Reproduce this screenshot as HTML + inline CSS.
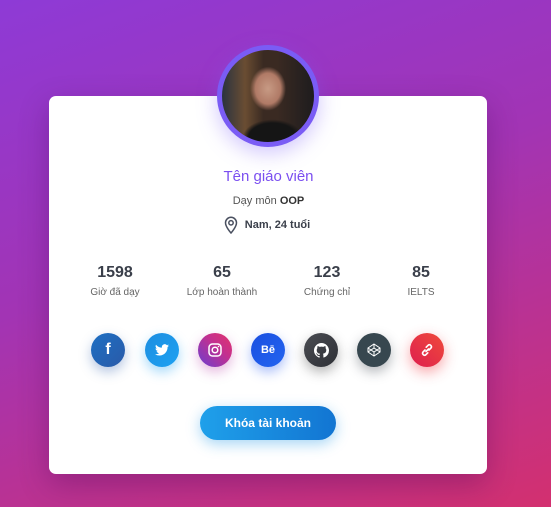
<!DOCTYPE html>
<html><head><style>
*{margin:0;padding:0;box-sizing:border-box}
body{width:551px;height:507px;overflow:hidden;background:linear-gradient(160deg,#8e3ad6 0%,#a234b4 45%,#d3306f 100%);font-family:"Liberation Sans","Noto Sans CJK SC",sans-serif;position:relative}
.card{position:absolute;left:49px;top:96px;width:438px;height:378px;background:#fff;border-radius:7px;box-shadow:0 10px 30px rgba(60,0,80,.3)}
.av{position:absolute;left:217px;top:45px;width:102px;height:102px;border-radius:50%;border:5px solid #7a5cf5;overflow:hidden;box-shadow:0 6px 20px rgba(122,92,245,.35);
background:radial-gradient(ellipse 18px 22px at 50% 42%,#c79a84 0%,#b07a66 70%,transparent 100%),radial-gradient(ellipse 30px 18px at 55% 95%,#151515 80%,transparent 100%),linear-gradient(90deg,#2a3340 0%,#6a4d32 25%,#3a2a22 45%,#3a2a22 60%,#1e1c1e 100%)}
.t{position:absolute;left:0;width:551px;text-align:center}
.st{position:absolute;text-align:center;width:120px}
.st b{display:block;font-size:16px;color:#3a3f4a}
.st span{display:block;font-size:10px;color:#666;margin-top:5px}
.ic{position:absolute;top:333px;width:34px;height:34px;border-radius:50%;color:#fff;display:flex;align-items:center;justify-content:center;font-weight:bold;font-size:13px}
.btn{position:absolute;left:200px;top:406px;width:136px;height:34px;border-radius:17px;background:linear-gradient(90deg,#1fa0ea,#1275d2);color:#fff;font-weight:bold;font-size:12px;display:flex;align-items:center;justify-content:center;box-shadow:0 4px 14px rgba(30,150,230,.4)}
</style></head><body>
<div class="card"></div>
<div class="av"></div>
<div class="t" style="top:168px;font-size:15px;color:#7b4ff0;left:-7px">Tên giáo viên</div>
<div class="t" style="top:195px;font-size:11px;color:#555;left:-7px">Dạy môn <b style="color:#333">OOP</b></div>
<div class="t" style="top:219px;font-size:11px;color:#3a3f4a;font-weight:bold;left:2px">Nam, 24 tuổi</div>
<svg style="position:absolute;left:224px;top:216px" width="14" height="18" viewBox="0 0 14 18"><path d="M7 17C7 17 1.5 11 1.5 6.8A5.5 5.5 0 0 1 12.5 6.8C12.5 11 7 17 7 17Z" fill="none" stroke="#4a5060" stroke-width="1.5"/><circle cx="7" cy="6.8" r="2.2" fill="none" stroke="#4a5060" stroke-width="1.5"/></svg>
<div class="st" style="left:55px;top:264px"><b>1598</b><span>Giờ đã dạy</span></div>
<div class="st" style="left:162px;top:264px"><b>65</b><span>Lớp hoàn thành</span></div>
<div class="st" style="left:267px;top:264px"><b>123</b><span>Chứng chỉ</span></div>
<div class="st" style="left:361px;top:264px"><b>85</b><span>IELTS</span></div>
<div class="ic" style="left:91px;background:linear-gradient(135deg,#1d6fc3,#2a5aa8);box-shadow:0 5px 12px rgba(40,90,170,.35);font-size:16px">f</div>
<div class="ic" style="left:145px;background:linear-gradient(135deg,#1d8ee0,#1da1f2);box-shadow:0 5px 12px rgba(29,161,242,.4)"><svg width="14" height="12" viewBox="0 0 24 20"><path d="M24 2.4a10 10 0 0 1-2.8.8 5 5 0 0 0 2.2-2.7 10 10 0 0 1-3.1 1.2A4.9 4.9 0 0 0 11.9 6 14 14 0 0 1 1.7.9a4.9 4.9 0 0 0 1.5 6.6 5 5 0 0 1-2.2-.6 4.9 4.9 0 0 0 3.900 4.9 5 5 0 0 1-2.2.1 4.9 4.9 0 0 0 4.6 3.4A9.9 9.9 0 0 1 0 17.3 14 14 0 0 0 7.5 19.5c9 0 14-7.5 14-14v-.6A10 10 0 0 0 24 2.4Z" fill="#fff"/></svg></div>
<div class="ic" style="left:198px;background:linear-gradient(45deg,#6a3fd0,#c42f8f 60%,#e2336b);box-shadow:0 5px 12px rgba(180,50,160,.35)"><svg width="14" height="14" viewBox="0 0 14 14"><rect x="1" y="1" width="12" height="12" rx="3.5" fill="none" stroke="#fff" stroke-width="1.5"/><circle cx="7" cy="7" r="2.8" fill="none" stroke="#fff" stroke-width="1.5"/><circle cx="10.5" cy="3.5" r=".8" fill="#fff"/></svg></div>
<div class="ic" style="left:251px;background:linear-gradient(135deg,#1a4fe0,#2364f0);box-shadow:0 5px 12px rgba(40,90,240,.4);font-size:11px">Bē</div>
<div class="ic" style="left:304px;background:linear-gradient(135deg,#4a4c52,#2e3036);box-shadow:0 5px 12px rgba(40,40,40,.35)"><svg width="15" height="15" viewBox="0 0 16 16"><path fill="#fff" d="M8 0C3.6 0 0 3.6 0 8c0 3.5 2.3 6.5 5.5 7.6.4.1.5-.2.5-.4v-1.4c-2.2.5-2.700-1-2.700-1-.4-.9-.9-1.2-.9-1.2-.7-.5.1-.5.1-.5.8.1 1.2.8 1.2.8.7 1.2 1.9.9 2.3.7.1-.5.3-.9.5-1.1-1.8-.2-3.6-.9-3.6-4 0-.9.3-1.6.8-2.1-.1-.2-.4-1 .1-2.1 0 0 .7-.2 2.2.8a7.5 7.5 0 0 1 4 0c1.5-1 2.2-.8 2.2-.8.4 1.1.2 1.9.1 2.1.5.6.8 1.3.8 2.1 0 3.1-1.9 3.7-3.6 3.9.3.3.5.8.5 1.5v2.2c0 .2.1.5.6.4A8 8 0 0 0 16 8c0-4.4-3.6-8-8-8Z"/></svg></div>
<div class="ic" style="left:357px;background:#37474f;box-shadow:0 5px 12px rgba(40,50,60,.35)"><svg width="14" height="14" viewBox="0 0 14 14" fill="none" stroke="#fff" stroke-width="1"><path d="M7 1 13 5v4L7 13 1 9V5Z M7 1v4M7 9v4M1 5l6 4 6-4M1 9l6-4 6 4"/></svg></div>
<div class="ic" style="left:410px;background:linear-gradient(45deg,#de1f4f,#ef4a3a);box-shadow:0 5px 14px rgba(240,50,60,.45)"><svg width="14" height="14" viewBox="0 0 14 14" fill="none" stroke="#fff" stroke-width="1.6" stroke-linecap="round"><path d="M6 8.5 8.5 6M5 7 3 9a2 2 0 0 0 2.8 2.8L7.8 9.8M9 7l2-2A2 2 0 0 0 8.2 2.2L6.2 4.2"/></svg></div>
<div class="btn">Khóa tài khoản</div>
</body></html>
